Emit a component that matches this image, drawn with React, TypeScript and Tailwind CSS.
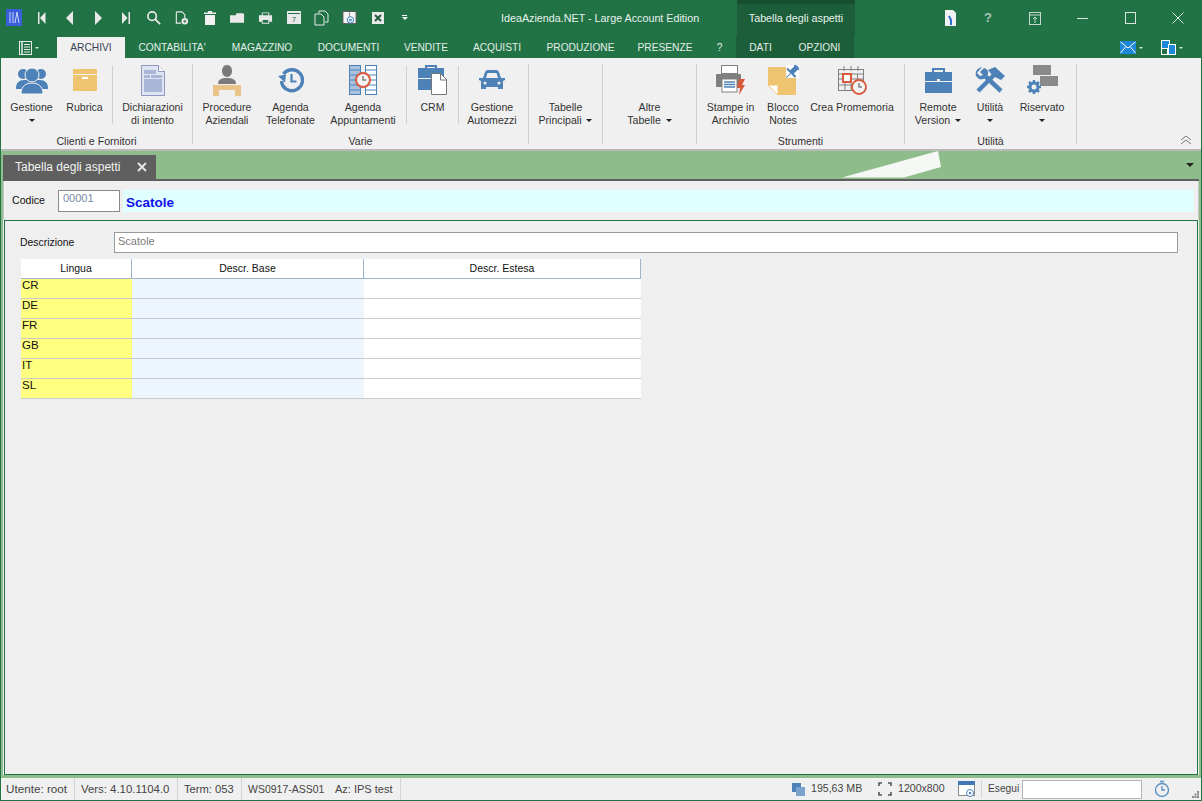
import React from "react";

const font = "font-['Liberation_Sans','Noto_Sans',sans-serif]";

function Caret({ className = "" }: { className?: string }) {
  return <span className={`inline-block w-0 h-0 border-l-[3px] border-r-[3px] border-t-[3px] border-l-transparent border-r-transparent border-t-[#222] ${className}`} />;
}

const W = "#e9e9e9";

const qat: React.ReactNode[] = [
  <svg width="8" height="14" viewBox="0 0 8 14"><path d="M0 1h1.500v12H0zM7.500 1v12L2 7z" fill={W} /></svg>,
  <svg width="8" height="14" viewBox="0 0 8 14"><path d="M7 0v14L0 7z" fill={W} /></svg>,
  <svg width="8" height="14" viewBox="0 0 8 14"><path d="M1 0v14l7-7z" fill={W} /></svg>,
  <svg width="8" height="14" viewBox="0 0 8 14"><path d="M6.500 1H8v12H6.500zM0 1v12l5.500-6z" fill={W} /></svg>,
  <svg width="16" height="16" viewBox="0 0 16 16"><circle cx="6.500" cy="6" r="4.500" fill="none" stroke={W} strokeWidth="1.800" /><path d="M10 9.500l5 5" stroke={W} strokeWidth="2" /></svg>,
  <svg width="16" height="16" viewBox="0 0 16 16"><path d="M2.500 1.500h6l3 3v4M2.500 1.500v12h5" fill="none" stroke={W} strokeWidth="1.200" /><circle cx="11.500" cy="11.500" r="3.500" fill={W} /><path d="M10 11.500h3M11.500 10v3" stroke="#217346" /></svg>,
  <svg width="14" height="14" viewBox="0 0 14 14"><path d="M5 0h4v1.500h4V3H1V1.500h4zM2 4h10v10H2z" fill="#f2f2f2" /></svg>,
  <svg width="16" height="14" viewBox="0 0 16 14"><path d="M0 4h6l1-2h7l1 1v9H0z" fill={W} /></svg>,
  <svg width="16" height="14" viewBox="0 0 16 14"><path d="M4 1h8v3h3v7h-3v2H4v-2H1V4h3z" fill={W} /><path d="M5 2h6v2H5zM5 9h6v3H5z" fill="#217346" /></svg>,
  <svg width="14" height="15" viewBox="0 0 14 15"><rect x="0" y="1" width="14" height="13" fill={W} /><path d="M1 3.500h12" stroke="#217346" /><text x="7" y="12" fontSize="8" textAnchor="middle" fill="#217346">7</text></svg>,
  <svg width="15" height="16" viewBox="0 0 15 16"><path d="M5 3V1h6l3 3v8h-3" fill="none" stroke={W} /><path d="M1 4h6l3 3v8H1z" fill="none" stroke={W} /></svg>,
  <svg width="16" height="16" viewBox="0 0 16 16"><rect x="1" y="1" width="14" height="13" fill="#f4f4f4" stroke="#555" /><path d="M8 2v6" stroke="#888" /><circle cx="9" cy="10" r="3.400" fill="#fff" stroke="#2a7ab8" /><path d="M7.500 9.500h3M7.500 11h3" stroke="#2a7ab8" /></svg>,
  <svg width="14" height="14" viewBox="0 0 14 14"><rect width="12" height="12" x="1" y="1" fill={W} /><path d="M4 4l6 6M10 4l-6 6" stroke="#215d3c" strokeWidth="2" /></svg>,
];

function TopBar() {
  return (
    <div className="h-[37px] bg-[#217346] flex items-center text-white relative shrink-0">
      <div className="ml-[5px] w-[16px] h-[17px] bg-[#3a5fd8] flex items-center justify-center mt-[-2px]">
        <svg width="12" height="13" viewBox="0 0 12 13"><path d="M2 1v11M5 1v11M7 12l2-11 2 11" fill="none" stroke="#c9d6ff" strokeWidth="1" /></svg>
      </div>
      <div className="ml-[12px] flex items-center gap-[13px] h-[20px] mt-[-2px]">
        {qat.map((q, i) => (
          <span key={i} className="w-[15px] flex justify-center">{q}</span>
        ))}
        <span className="ml-[3px] w-[7px] flex flex-col items-center gap-[1px]">
          <span className="w-[5px] h-[1px] bg-white" />
          <span className="w-0 h-0 border-l-[3px] border-r-[3px] border-t-[3px] border-l-transparent border-r-transparent border-t-white" />
        </span>
      </div>
      <div className="absolute left-[500px] top-[10px] text-[10.75px] leading-[16px] text-[#e8f1ec] whitespace-nowrap">IdeaAzienda.NET - Large Account Edition</div>
      <div className="absolute left-[736px] top-0 w-[118px] h-[37px] bg-[#1c5e39] border-t-[4px] border-[#174e30] text-center text-[10.75px] leading-[16px] pt-[6px] text-[#e8f1ec]">Tabella degli aspetti</div>
      <svg className="absolute left-[944px] top-[10px]" width="11" height="17" viewBox="0 0 11 17"><path d="M0 0h8l3 3v13H0z" fill="#f2f2f2" /><path d="M4 6l2 4v5" stroke="#2a6fd0" strokeWidth="2" fill="none" /></svg>
      <span className="absolute left-[983px] top-[10px] text-[13px] leading-[16px] font-bold text-[#a9c7b6]">?</span>
      <svg className="absolute left-[1028px] top-[12px]" width="12" height="13" viewBox="0 0 12 13"><rect x=".5" y=".5" width="11" height="12" fill="none" stroke="#c5d9cd" /><path d="M1 3h10M6 11V5M4 7l2-2 2 2" stroke="#c5d9cd" fill="none" /></svg>
      <svg className="absolute left-[1076px] top-[12px]" width="11" height="12" viewBox="0 0 11 12"><path d="M0 6.500h11" stroke="#dbe8e0" /></svg>
      <svg className="absolute left-[1124px] top-[12px]" width="11" height="12" viewBox="0 0 11 12"><rect x=".5" y=".5" width="10" height="11" fill="none" stroke="#dbe8e0" /></svg>
      <svg className="absolute left-[1171px] top-[12px]" width="12" height="12" viewBox="0 0 12 12"><path d="M.5.500l11 11M11.500.500l-11 11" stroke="#dbe8e0" /></svg>
    </div>
  );
}

const tabs: [string, string][] = [
  ["CONTABILITA'", "w-[94px]"], ["MAGAZZINO", "w-[86px]"], ["DOCUMENTI", "w-[87px]"], ["VENDITE", "w-[68px]"], ["ACQUISTI", "w-[74px]"], ["PRODUZIONE", "w-[93px]"], ["PRESENZE", "w-[76px]"], ["?", "w-[33px]"],
];

function SmallCaret() {
  return <span className="w-0 h-0 border-l-[2px] border-r-[2px] border-t-[2px] border-l-transparent border-r-transparent border-t-[#dfe8e2]" />;
}

function TabBar() {
  return (
    <div className="h-[21px] bg-[#217346] flex items-end text-[10.2px] leading-[21px] text-[#e3eee8] shrink-0 relative">
      <div className="w-[56px] h-[21px] flex items-center pl-[18px] gap-[3px]">
        <svg width="13" height="14" viewBox="0 0 13 14"><rect x=".5" y=".5" width="12" height="13" fill="none" stroke={W} /><path d="M3 1v12" stroke={W} strokeWidth="1.500" /><path d="M5 3.500h6M5 6h6M5 8.500h6M5 11h6" stroke={W} /></svg>
        <SmallCaret />
      </div>
      <div className="w-[68px] h-[21px] bg-[#f0f0f0] text-[#3b3f55] text-center">ARCHIVI</div>
      <div className="flex h-[21px]">
        {tabs.map(([t, w]) => (
          <span key={t} className={`${w} text-center whitespace-nowrap`}>{t}</span>
        ))}
      </div>
      <div className="h-[21px] w-[118px] bg-[#1c5e39] flex">
        <span className="w-[49px] text-center">DATI</span>
        <span className="w-[69px] text-center">OPZIONI</span>
      </div>
      <div className="ml-auto mr-[18px] h-[21px] flex items-center gap-[18px]">
        <span className="flex items-center gap-[3px]">
          <svg width="16" height="13" viewBox="0 0 16 13"><rect width="16" height="13" fill="#1e88d8" /><path d="M.5 1l7.500 6 7.500-6M.5 12l5-6M15.500 12l-5-6" fill="none" stroke="#fff" /></svg>
          <SmallCaret />
        </span>
        <span className="flex items-center gap-[3px]">
          <svg width="15" height="15" viewBox="0 0 15 15"><rect x=".5" y=".5" width="8" height="8" fill="#1e88d8" stroke="#fff" /><rect x=".5" y="8.500" width="6" height="6" fill="#217346" stroke="#fff" /><rect x="7.500" y="4.500" width="7" height="10" fill="#1e88d8" stroke="#fff" /></svg>
          <SmallCaret />
        </span>
      </div>
    </div>
  );
}

const BLUE = "#4d82b8";
const GOLD = "#eec471";
const GRAY = "#808080";
const ORG = "#d9593b";

const icons = {
  people: <svg width="32" height="27" viewBox="0 0 32 27"><circle cx="7" cy="7" r="5" fill={BLUE} /><circle cx="25" cy="7" r="5" fill={BLUE} /><path d="M0 21c0-5 3-8 8-8h16c5 0 8 3 8 8v1H0z" fill={BLUE} /><circle cx="16" cy="8" r="7" fill={BLUE} stroke="#f0f0f0" /><path d="M5 27c0-8 5-11 11-11s11 3 11 11z" fill={BLUE} stroke="#f0f0f0" /></svg>,
  box: <svg width="24" height="22" viewBox="0 0 24 22"><rect y="0" width="24" height="5" fill={GOLD} /><rect y="6" width="24" height="16" fill={GOLD} /><rect x="9" y="8" width="6" height="2" fill="#fff" /></svg>,
  doc: <svg width="24" height="31" viewBox="0 0 24 31"><path d="M.5.500h17l6 6v24H.5z" fill="#dfe4f2" stroke="#8f98bf" /><path d="M17.500.500v6h6" fill="#fff" stroke="#8f98bf" /><path d="M3 5h12v4H3zM3 10h6v3H3zM10 10h11v3H10zM3 14h18v13H3z" fill="#a9b6d8" /></svg>,
  desk: <svg width="28" height="32" viewBox="0 0 28 32"><path d="M14 1c3.500 0 5 3 5 6s-2 6-5 6-5-3-5-6 1.500-6 5-6z" fill="#7a7a7a" /><path d="M5 20c0-5 4-6 9-6s9 1 9 6z" fill="#7a7a7a" /><path d="M0 21h28v11h-6v-6H6v6H0z" fill="#e9c486" /></svg>,
  clockBack: <svg width="26" height="25" viewBox="0 0 26 25"><path d="M5.500 6a10.500 10.500 0 1 1-2 7" fill="none" stroke={BLUE} strokeWidth="3.400" /><path d="M0 8l8-1.500-1 8z" fill={BLUE} /><path d="M13.500 6v7.500h5" fill="none" stroke={BLUE} strokeWidth="2.200" /></svg>,
  agenda: <svg width="28" height="30" viewBox="0 0 28 30"><rect x=".5" y=".5" width="11" height="29" fill="#a9c3de" stroke={BLUE} /><rect x="16.500" y=".5" width="11" height="29" fill="#fff" stroke={BLUE} /><path d="M1 5h10M1 10h10M1 15h10M1 20h10M1 25h10M17 5h10M17 10h10M17 15h10M17 20h10M17 25h10" stroke={BLUE} /><circle cx="14" cy="15" r="7" fill="#f4f4f4" stroke={ORG} strokeWidth="2" /><path d="M14 11v4h3" fill="none" stroke={GRAY} strokeWidth="1.500" /></svg>,
  crm: <svg width="29" height="30" viewBox="0 0 29 30"><path d="M8 3V1h10v2" fill="none" stroke={BLUE} strokeWidth="2" /><rect y="3" width="26" height="10" fill={BLUE} /><rect y="14" width="26" height="11" fill={BLUE} /><path d="M13.500 8.500h9l6 6v15h-15z" fill="#fff" stroke="#777" /><path d="M22.500 9v6h6" fill="none" stroke="#777" /></svg>,
  car: <svg width="28" height="21" viewBox="0 0 28 21"><path d="M5 8l2-6q.5-2 3-2h8q2.500 0 3 2l2 6h4v2l-2 1v8h-5v-2H8v2H3v-8l-2-1V8zM8 8h12l-1.500-5h-9z" fill={BLUE} fillRule="evenodd" /><circle cx="7" cy="13" r="1.500" fill="#f0f0f0" /><circle cx="21" cy="13" r="1.500" fill="#f0f0f0" /></svg>,
  printer: <svg width="29" height="30" viewBox="0 0 29 30"><rect x="5.500" y=".5" width="16" height="8" fill="#fff" stroke="#808080" /><rect x="0" y="9" width="25" height="13" rx="1" fill="#7f7f7f" /><rect x="6" y="14" width="15" height="13" fill="#fff" stroke="#808080" /><path d="M8 17h11M8 19.500h11M8 22h11" stroke={BLUE} strokeWidth="1.500" /><path d="M23 14h6l-3 6h3l-6 10 1-7h-3z" fill={ORG} /></svg>,
  note: (
    <svg width="31" height="30" viewBox="0 0 31 30">
      <path d="M0 2h28v28H10L0 20z" fill={GOLD} />
      <path d="M0 20h10v10z" fill="#fff" stroke={GOLD} />
      <rect x="18" y="0" width="13" height="13" fill="#fff" />
      <g transform="rotate(45 24 7)">
        <path d="M20 -1h8v2h-1.500v6H30v2H18V7h3.500V1H20z" fill={BLUE} />
        <path d="M23.500 9h1v6h-1z" fill={BLUE} />
      </g>
    </svg>
  ),
  cal: <svg width="29" height="30" viewBox="0 0 29 30"><rect x=".5" y="4.500" width="25" height="21" fill="#f0f0f0" stroke="#808080" /><path d="M.5 4.500h25V9H.5zM6 1v5M13 1v5M20 1v5M.5 14h25M.5 20h25M7 9v17M13 9v17M19.500 9v17" fill="none" stroke="#808080" /><rect x="5" y="9" width="8" height="8" fill="#fff" stroke={ORG} strokeWidth="2" /><circle cx="21" cy="22" r="7" fill="#f4f4f4" stroke={ORG} strokeWidth="1.800" /><path d="M21 18v4h3" fill="none" stroke="#808080" strokeWidth="1.500" /></svg>,
  case: <svg width="27" height="25" viewBox="0 0 27 25"><path d="M8 4V1h11v3" fill="none" stroke={BLUE} strokeWidth="2" /><rect y="4" width="27" height="9" fill={BLUE} /><rect y="14" width="27" height="11" fill={BLUE} /><rect x="12" y="11" width="3" height="3" fill="#f0f0f0" /></svg>,
  tools: (
    <svg width="30" height="26" viewBox="0 0 30 26">
      <path d="M3 24L19 8" stroke={BLUE} strokeWidth="4.500" />
      <path d="M13 3l7-3 10 9-4 4-4-2-4-2z" fill={BLUE} />
      <path d="M9 8l17 16" stroke={BLUE} strokeWidth="4.500" />
      <path d="M7 0A7 7 0 0 0 1 9l3 3a7 7 0 0 0 9-8 7 7 0 0 0-4-3L5 5l3 3-3 1-3-3" fill={BLUE} />
    </svg>
  ),
  gear: <svg width="32" height="30" viewBox="0 0 32 30"><rect x="7" y="0" width="18" height="10" fill="#8a8a8a" /><rect x="14" y="11" width="18" height="10" fill="#8a8a8a" /><circle cx="8" cy="22" r="4" fill="none" stroke={BLUE} strokeWidth="3" /><path d="M8 15v3M8 26v3M1 22h3M12 22h3M3 17l2 2M11 25l2 2M13 17l-2 2M5 25l-2 2" stroke={BLUE} strokeWidth="2.500" /></svg>,
};

function Item({ w, icon, lines, caret, inlineCaret }: { w: string; icon: React.ReactNode; lines: string[]; caret?: boolean; inlineCaret?: boolean }) {
  return (
    <div className={`${w} shrink-0 flex flex-col items-center h-[70px]`}>
      <div className="h-[32px] flex items-center justify-center">{icon}</div>
      <div className="mt-[5px] text-[10.6px] leading-[13px] text-center whitespace-nowrap text-[#333]">
        {lines.map((l, i) => (
          <div key={i} className="flex items-center justify-center gap-[5px]">
            {l}
            {inlineCaret && i === lines.length - 1 && <Caret />}
          </div>
        ))}
        {caret && <div className="h-[13px] flex items-center justify-center"><Caret /></div>}
      </div>
    </div>
  );
}

function TextItem({ w, lines }: { w: string; lines: string[] }) {
  return (
    <div className={`${w} shrink-0 h-[70px] pt-[37px] text-[10.6px] leading-[13px] text-center whitespace-nowrap text-[#333]`}>
      {lines.map((l, i) => (
        <div key={i} className="flex items-center justify-center gap-[5px]">
          {l}
          {i === 1 && <Caret />}
        </div>
      ))}
    </div>
  );
}

function Group({ w, label, children }: { w: string; label?: string; children: React.ReactNode }) {
  return (
    <div className={`${w} shrink-0 h-[80px] flex flex-col border-r border-[#cfcfcf]`}>
      <div className="flex h-[70px]">{children}</div>
      {label && <div className="text-[10.6px] leading-[14px] text-center text-[#333] whitespace-nowrap">{label}</div>}
    </div>
  );
}

const Sep = ({ ml = "" }: { ml?: string }) => <div className={`w-px h-[58px] bg-[#cfcfcf] mt-[2px] shrink-0 ${ml}`} />;

function Ribbon() {
  return (
    <div className="h-[93px] bg-[#f0f0f0] border-b-2 border-[#b9b9b9] shrink-0 pt-[6px] flex relative">
      <Group w="w-[192px]" label="Clienti e Fornitori">
        <Item w="w-[61px]" icon={icons.people} lines={["Gestione"]} caret />
        <Item w="w-[45px]" icon={icons.box} lines={["Rubrica"]} />
        <Sep ml="ml-[5px]" />
        <Item w="w-[79px]" icon={icons.doc} lines={["Dichiarazioni", "di intento"]} />
      </Group>
      <Group w="w-[336px]" label="Varie">
        <Item w="w-[68px]" icon={icons.desk} lines={["Procedure", "Aziendali"]} />
        <Item w="w-[59px]" icon={icons.clockBack} lines={["Agenda", "Telefonate"]} />
        <Item w="w-[86px]" icon={icons.agenda} lines={["Agenda", "Appuntamenti"]} />
        <Sep />
        <Item w="w-[51px]" icon={icons.crm} lines={["CRM"]} />
        <Sep />
        <Item w="w-[66px]" icon={icons.car} lines={["Gestione", "Automezzi"]} />
      </Group>
      <Group w="w-[74px]">
        <TextItem w="w-[73px]" lines={["Tabelle", "Principali"]} />
      </Group>
      <Group w="w-[94px]">
        <TextItem w="w-[93px]" lines={["Altre", "Tabelle"]} />
      </Group>
      <Group w="w-[208px]" label="Strumenti">
        <Item w="w-[67px]" icon={icons.printer} lines={["Stampe in", "Archivio"]} />
        <Item w="w-[38px]" icon={icons.note} lines={["Blocco", "Notes"]} />
        <Item w="w-[100px]" icon={icons.cal} lines={["Crea Promemoria"]} />
      </Group>
      <Group w="w-[172px]" label="Utilità">
        <Item w="w-[66px]" icon={icons.case} lines={["Remote", "Version"]} inlineCaret />
        <Item w="w-[38px]" icon={icons.tools} lines={["Utilità"]} caret />
        <Item w="w-[66px]" icon={icons.gear} lines={["Riservato"]} caret />
      </Group>
      <svg className="absolute left-[1179px] top-[77px]" width="12" height="10" viewBox="0 0 12 10"><path d="M1 5l5-4 5 4M1 9l5-4 5 4" fill="none" stroke="#777" /></svg>
    </div>
  );
}

function DocStrip() {
  return (
    <div className="h-[28px] bg-[#8fbc8b] shrink-0 flex items-end pl-[2px] relative overflow-hidden">
      <div className="w-[153px] h-[24px] bg-[#5f5f5f] flex items-center text-[12px] text-[#f2f2f2] pl-[12px]">
        <span className="whitespace-nowrap w-[122px]">Tabella degli aspetti</span>
        <svg width="10" height="10" viewBox="0 0 10 10"><path d="M1 1l8 8M9 1l-8 8" stroke="#e8e8e8" strokeWidth="1.800" /></svg>
      </div>
      <svg className="absolute left-[841px] top-0" width="100" height="28" viewBox="0 0 100 28"><path d="M0 26.500L96 0l3 16-37 10.500z" fill="#f6f8f5" /></svg>
      <Caret className="absolute right-[7px] top-[12px] border-l-[4px] border-r-[4px] border-t-[4px]" />
    </div>
  );
}

const rows = ["CR", "DE", "FR", "GB", "IT", "SL"];

function Grid() {
  return (
    <div className="w-[620px] ml-[16px] mt-[6px] text-[10.5px] text-[#111]">
      <div className="flex h-[20px] bg-white leading-[19px] text-center border-b border-[#a0b4c8]">
        <div className="w-[111px] border-r border-[#a0b4c8]">Lingua</div>
        <div className="w-[232px] border-r border-[#a0b4c8]">Descr. Base</div>
        <div className="w-[277px] border-r border-[#a0b4c8]">Descr. Estesa</div>
      </div>
      {rows.map((r) => (
        <div key={r} className="flex h-[20px] border-b border-[#c8ccd0] bg-white">
          <div className="w-[111px] bg-[#ffff80] pl-[1px] text-[11.5px] leading-[13px]">{r}</div>
          <div className="w-[232px] bg-[#eef6fd]" />
          <div className="w-[277px] bg-white" />
        </div>
      ))}
    </div>
  );
}

function Content() {
  return (
    <div className="flex-1 min-h-0 bg-[#8fbc8b] pl-[2px] pr-[2px] pb-[3px] flex flex-col">
      <div className="flex-1 min-h-0 border-t-2 border-[#5f5f5f] bg-[#efefef] flex flex-col">
        <div className="h-[39px] shrink-0 flex items-center pl-[8px] border-l border-r border-[#c8c8c8] pr-[4px]">
          <span className="w-[46px] text-[10.6px] text-[#111]">Codice</span>
          <div className="w-[62px] h-[22px] bg-white border border-[#8a8a8a] text-[11px] leading-[15px] text-[#7a8aa5] pl-[4px]">00001</div>
          <div className="flex-1 ml-[3px] h-[22px] bg-[#e0ffff] pl-[3px] text-[13.5px] leading-[26px] font-bold text-[#1010ee]">Scatole</div>
        </div>
        <div className="flex-1 min-h-0 ml-[1px] mr-[1px] border border-[#217346] pt-[11px]">
          <div className="flex items-center pl-[15px] h-[21px]">
            <span className="w-[94px] text-[10.4px] text-[#111]">Descrizione</span>
            <div className="w-[1064px] h-[21px] bg-white border border-[#9a9a9a] text-[11px] leading-[16px] pl-[3px] text-[#7c7c7c]">Scatole</div>
          </div>
          <Grid />
        </div>
      </div>
    </div>
  );
}

function Status() {
  return (
    <div className="h-[22px] bg-[#f0f0f0] shrink-0 flex items-center text-[10.6px] text-[#444] relative">
      <div className="flex h-full items-center whitespace-nowrap">
        <div className="w-[74px] pl-[5px] border-r border-[#d4d4d4] h-full leading-[22px] text-[11.7px]">Utente: root</div>
        <div className="w-[103px] pl-[6px] border-r border-[#d4d4d4] h-full leading-[22px] text-[11.4px]">Vers: 4.10.1104.0</div>
        <div className="w-[64px] pl-[6px] border-r border-[#d4d4d4] h-full leading-[22px] text-[11.2px]">Term: 053</div>
        <div className="w-[159px] pl-[6px] border-r border-[#d4d4d4] h-full leading-[22px] flex"><span className="w-[87px] text-[10.5px]">WS0917-ASS01</span><span className="text-[11px]">Az: IPS test</span></div>
      </div>
      <div className="ml-auto flex h-full items-center whitespace-nowrap">
        <svg width="13" height="13" viewBox="0 0 13 13"><rect width="9" height="9" fill="#4d82b8" /><rect x="4" y="4" width="9" height="9" fill="#7ba3cb" /></svg>
        <span className="ml-[6px] w-[67px]">195,63 MB</span>
        <svg width="14" height="14" viewBox="0 0 14 14"><path d="M1 4V1h3M10 1h3v3M13 10v3h-3M4 13H1v-3" fill="none" stroke="#555" strokeWidth="1.600" /></svg>
        <span className="ml-[6px] w-[60px]">1200x800</span>
        <svg width="17" height="17" viewBox="0 0 17 17"><rect x=".5" y=".5" width="16" height="14" fill="#fff" stroke="#888" /><rect width="17" height="4" fill="#3f78b5" /><circle cx="12" cy="12" r="3.500" fill="#fff" stroke="#4d82b8" /><circle cx="12" cy="12" r="1.200" fill="#4d82b8" /></svg>
        <span className="ml-[6px] w-px h-[18px] bg-[#d4d4d4]" />
        <span className="ml-[6px] w-[31px] text-[10.2px]">Esegui</span>
        <div className="ml-[3px] w-[120px] h-[19px] bg-white border border-[#b4b4b4]" />
        <svg className="ml-[12px]" width="16" height="18" viewBox="0 0 16 18"><circle cx="8" cy="10" r="6.500" fill="none" stroke="#5a92c8" strokeWidth="1.400" /><path d="M8 6v4h3M6 1.500h4" fill="none" stroke="#5a92c8" strokeWidth="1.300" /></svg>
        <svg className="ml-[22px] mr-[2px] mt-[11px]" width="7" height="7" viewBox="0 0 7 7"><path d="M5 0h2v2H5zM2.500 2.500h2v2h-2zM5 2.500h2v2H5zM0 5h2v2H0zM2.500 5h2v2h-2zM5 5h2v2H5z" fill="#8a8a8a" /></svg>
      </div>
    </div>
  );
}

export default function App() {
  return (
    <div className={`w-[1202px] h-[801px] overflow-hidden flex flex-col ${font} border-l border-r border-b border-[#217346] bg-[#f0f0f0]`}>
      <TopBar />
      <TabBar />
      <Ribbon />
      <DocStrip />
      <Content />
      <Status />
    </div>
  );
}
